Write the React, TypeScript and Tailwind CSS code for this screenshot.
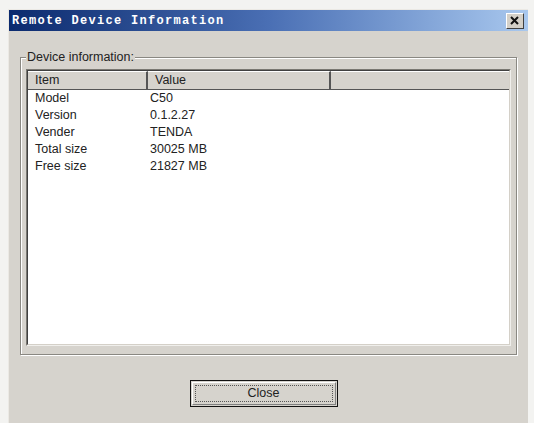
import React from "react";

const rows = [
  ["Model", "C50"],
  ["Version", "0.1.2.27"],
  ["Vender", "TENDA"],
  ["Total size", "30025 MB"],
  ["Free size", "21827 MB"],
];

export default function App() {
  return (
    <div className="w-[534px] h-[423px] bg-[#f3f3f1] pt-[9px] pl-[8px] pr-[6px] overflow-hidden" style={{ fontFamily: '"Liberation Sans", Arial, sans-serif' }}>
      <div className="h-full flex flex-col bg-[#d6d3cd] border-l border-t border-[#ebe9e4]">
        {/* title bar */}
        <div className="h-[21px] flex items-center justify-between pl-[3px] pr-[4px] bg-gradient-to-r from-[#0b2a6e] via-[#4a6fb4] to-[#a9c8ee]">
          <span className="text-white font-bold text-[12px] tracking-[1.3px]" style={{ fontFamily: '"Liberation Mono", "Courier New", monospace' }}>
            Remote Device Information
          </span>
          <div className="w-[18px] h-[16px] bg-[#d4d0c8] border-t border-l border-white border-r border-b border-r-[#404040] border-b-[#404040] flex items-center justify-center">
            <svg width="10" height="9" viewBox="0 0 10 9">
              <path d="M1 1 L8 8 M8 1 L1 8" stroke="#111" strokeWidth="2" />
            </svg>
          </div>
        </div>
        {/* body */}
        <div className="flex-1 flex flex-col px-[11px] pt-[26px]">
          <div className="relative h-[298px] flex flex-col border border-[#8a8882] shadow-[1px_1px_0_#ffffff,inset_1px_1px_0_#ffffff] px-[5px] pt-[11px] pb-[8px]">
            <span className="absolute left-[5px] top-[-9px] px-[1px] bg-[#d6d3cd] text-[12.5px] text-[#222] leading-[16px]">Device information:</span>
            <div className="flex-1 flex flex-col bg-white border border-t-[#7a7872] border-l-[#7a7872] border-r-[#f0efec] border-b-[#f0efec]">
              <div className="flex-1 flex flex-col border border-t-[#404040] border-l-[#404040] border-r-[#d4d0c8] border-b-[#d4d0c8]">
                <div className="flex h-[19px] bg-[#d6d3cd] text-[12.5px] text-[#222] border-b border-[#555]">
                  <div className="w-[120px] border-r-2 border-[#555] pl-[7px] flex items-center border-t border-t-white">Item</div>
                  <div className="w-[183px] border-r-2 border-[#555] pl-[7px] flex items-center border-t border-t-white">Value</div>
                  <div className="flex-1 border-t border-t-white" />
                </div>
                <div className="text-[12.5px] text-[#222]">
                  {rows.map(([k, v]) => (
                    <div key={k} className="flex h-[17px] items-center">
                      <div className="w-[122px] pl-[7px]">{k}</div>
                      <div>{v}</div>
                    </div>
                  ))}
                </div>
              </div>
            </div>
          </div>
          <div className="flex justify-center mt-[25px] pr-[10px]">
            <div className="w-[148px] h-[27px] border border-[#111] bg-[#d6d3cd] p-[1px]">
              <div className="w-full h-full border border-t-white border-l-white border-r-[#808080] border-b-[#808080] p-[2px]">
                <div className="w-full h-full border border-dotted border-[#555] flex items-center justify-center text-[12.5px] text-[#222]">
                  Close
                </div>
              </div>
            </div>
          </div>
        </div>
      </div>
    </div>
  );
}
